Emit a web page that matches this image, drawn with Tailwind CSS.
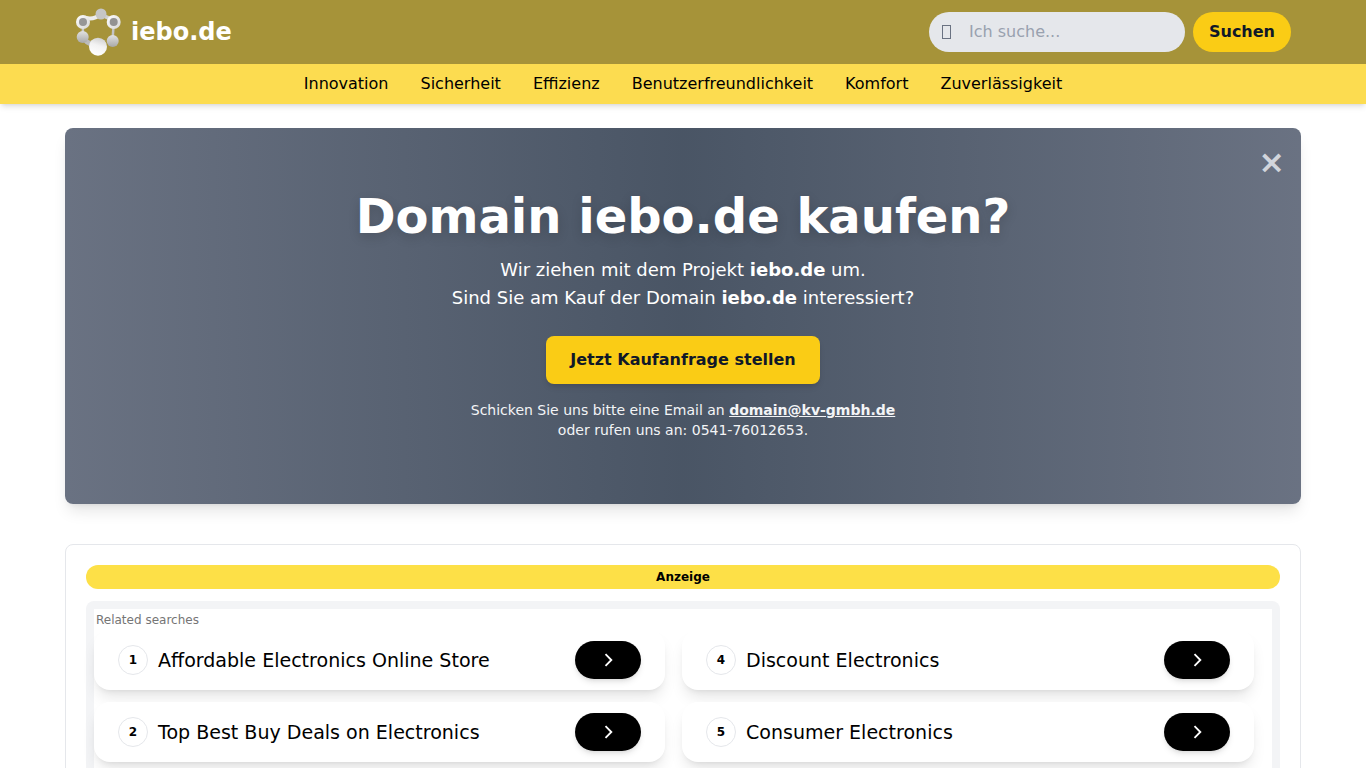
<!DOCTYPE html>
<html lang="de">
<head>
    <meta charset="UTF-8">
    <meta name="viewport" content="width=device-width, initial-scale=1.0">
    <title>iebo.de</title>
    <script src="https://cdn.jsdelivr.net/npm/@tailwindcss/browser@4"></script>
</head>
<body class="bg-white text-black font-['DejaVu_Sans',sans-serif] h-screen overflow-hidden">
    <header class="shadow-md">
        <div class="bg-[#a69339] h-16">
            <div class="w-[1236px] mx-auto h-full px-2.5 flex items-center justify-between">
                <a href="#" class="flex items-center gap-2">
                    <svg class="w-12 h-12" viewBox="0 0 48 48">
                        <defs>
                            <linearGradient id="logoGrad" x1="0.7" y1="0" x2="0.4" y2="1">
                                <stop offset="0" stop-color="#cfcfcf"/>
                                <stop offset="0.45" stop-color="#f2f2f2"/>
                                <stop offset="1" stop-color="#ffffff"/>
                            </linearGradient>
                            <linearGradient id="ringGrad" x1="0" y1="0" x2="1" y2="1">
                                <stop offset="0" stop-color="#ffffff"/>
                                <stop offset="1" stop-color="#d6d6d6"/>
                            </linearGradient>
                            <linearGradient id="greyGrad" x1="0" y1="0" x2="0" y2="1">
                                <stop offset="0" stop-color="#e2e2e2"/>
                                <stop offset="1" stop-color="#a8a8a8"/>
                            </linearGradient>
                        </defs>
                        <g fill="none" stroke-linecap="round">
                            <path d="M11 10 Q19 12 26 6" stroke="#ececec" stroke-width="4"/>
                            <path d="M27 6 Q32 11 37 10" stroke="#d2d2d2" stroke-width="3.5"/>
                            <path d="M38.5 18 L37.7 30" stroke="#c4c4c4" stroke-width="2.5"/>
                            <path d="M8 20 L7.7 26" stroke="#c8c8c8" stroke-width="2.5"/>
                            <path d="M9 31 Q14 37 22 37" stroke="#bcbcbc" stroke-width="5"/>
                        </g>
                        <circle cx="26" cy="6" r="5.5" fill="#c6c6c6"/>
                        <circle cx="8" cy="14" r="7" fill="url(#ringGrad)"/>
                        <circle cx="8" cy="14" r="4" fill="#969696"/>
                        <circle cx="38.7" cy="14" r="7" fill="url(#ringGrad)"/>
                        <circle cx="38.7" cy="14" r="4" fill="#929292"/>
                        <circle cx="7.7" cy="29" r="6" fill="url(#greyGrad)"/>
                        <circle cx="37.7" cy="33" r="6" fill="url(#greyGrad)"/>
                        <circle cx="23" cy="38.7" r="9" fill="url(#logoGrad)"/>
                    </svg>
                    <span class="text-white font-bold text-2xl">iebo.de</span>
                </a>
                <form class="flex items-center gap-2">
                    <div class="w-64 h-10 rounded-full bg-gray-200 flex items-center pl-[13px] text-gray-400">
                        <span class="w-[9px] h-[14px] border border-gray-500 mr-[18px]"></span>
                        <span>Ich suche...</span>
                    </div>
                    <button type="button" class="h-10 px-4 rounded-full bg-[#facc15] text-gray-900 font-bold">Suchen</button>
                </form>
            </div>
        </div>
        <nav class="bg-[#fcdc50] h-10 flex items-center justify-center gap-8">
            <a href="#">Innovation</a>
            <a href="#">Sicherheit</a>
            <a href="#">Effizienz</a>
            <a href="#">Benutzerfreundlichkeit</a>
            <a href="#">Komfort</a>
            <a href="#">Zuverlässigkeit</a>
        </nav>
    </header>

    <main class="w-[1236px] mx-auto pt-6">
        <section class="relative h-[376px] rounded-lg shadow-lg bg-gradient-to-r from-gray-500 via-gray-600 to-gray-500 text-white text-center pt-16">
            <button type="button" class="absolute top-[18px] right-[16px] text-[32px] leading-none font-bold text-gray-300">×</button>
            <h1 class="text-5xl font-bold leading-none [text-shadow:0_4px_12px_rgba(0,0,0,0.15)]">Domain iebo.de kaufen?</h1>
            <p class="text-lg leading-7 mt-4">
                Wir ziehen mit dem Projekt <b>iebo.de</b> um.<br>
                Sind Sie am Kauf der Domain <b>iebo.de</b> interessiert?
            </p>
            <a href="#" class="inline-block mt-6 h-12 leading-12 px-6 rounded-lg bg-[#facc15] text-gray-900 font-bold shadow-md">Jetzt Kaufanfrage stellen</a>
            <p class="text-sm leading-5 mt-4 text-gray-100">
                Schicken Sie uns bitte eine Email an <a href="#" class="font-bold underline">domain@kv-gmbh.de</a><br>
                oder rufen uns an: 0541-76012653.
            </p>
        </section>

        <section class="mt-10 border border-gray-200 rounded-lg p-5 h-[400px]">
            <div class="h-6 rounded-full bg-[#fde047] text-xs font-bold flex items-center justify-center">Anzeige</div>
            <div class="mt-3 bg-gray-100 rounded-lg p-2 h-[400px]">
                <div class="bg-white h-full">
                    <div class="text-xs leading-[19px] pt-0.5 text-[#757575] pl-0.5">Related searches</div>
                    <div class="w-[1160px] grid grid-cols-[571px_572px] gap-x-[17px] gap-y-3">
                        <a href="#" class="h-[60px] rounded-2xl bg-white shadow-lg flex items-center px-6">
                            <span class="w-[30px] h-[30px] rounded-full border border-gray-200 flex items-center justify-center text-xs font-bold mr-2.5">1</span>
                            <span class="text-[19.04px] flex-1">Affordable Electronics Online Store</span>
                            <span class="w-[66px] h-[38px] rounded-full bg-black shadow-md flex items-center justify-center">
                                <svg class="w-5 h-5" viewBox="0 0 24 24" fill="none" stroke="white" stroke-width="2.2"><path d="M9 5l7 7-7 7"/></svg>
                            </span>
                        </a>
                        <a href="#" class="h-[60px] rounded-2xl bg-white shadow-lg flex items-center px-6">
                            <span class="w-[30px] h-[30px] rounded-full border border-gray-200 flex items-center justify-center text-xs font-bold mr-2.5">4</span>
                            <span class="text-[19.04px] flex-1">Discount Electronics</span>
                            <span class="w-[66px] h-[38px] rounded-full bg-black shadow-md flex items-center justify-center">
                                <svg class="w-5 h-5" viewBox="0 0 24 24" fill="none" stroke="white" stroke-width="2.2"><path d="M9 5l7 7-7 7"/></svg>
                            </span>
                        </a>
                        <a href="#" class="h-[60px] rounded-2xl bg-white shadow-lg flex items-center px-6">
                            <span class="w-[30px] h-[30px] rounded-full border border-gray-200 flex items-center justify-center text-xs font-bold mr-2.5">2</span>
                            <span class="text-[19.04px] flex-1">Top Best Buy Deals on Electronics</span>
                            <span class="w-[66px] h-[38px] rounded-full bg-black shadow-md flex items-center justify-center">
                                <svg class="w-5 h-5" viewBox="0 0 24 24" fill="none" stroke="white" stroke-width="2.2"><path d="M9 5l7 7-7 7"/></svg>
                            </span>
                        </a>
                        <a href="#" class="h-[60px] rounded-2xl bg-white shadow-lg flex items-center px-6">
                            <span class="w-[30px] h-[30px] rounded-full border border-gray-200 flex items-center justify-center text-xs font-bold mr-2.5">5</span>
                            <span class="text-[19.04px] flex-1">Consumer Electronics</span>
                            <span class="w-[66px] h-[38px] rounded-full bg-black shadow-md flex items-center justify-center">
                                <svg class="w-5 h-5" viewBox="0 0 24 24" fill="none" stroke="white" stroke-width="2.2"><path d="M9 5l7 7-7 7"/></svg>
                            </span>
                        </a>
                    </div>
                </div>
            </div>
        </section>
    </main>
</body>
</html>
